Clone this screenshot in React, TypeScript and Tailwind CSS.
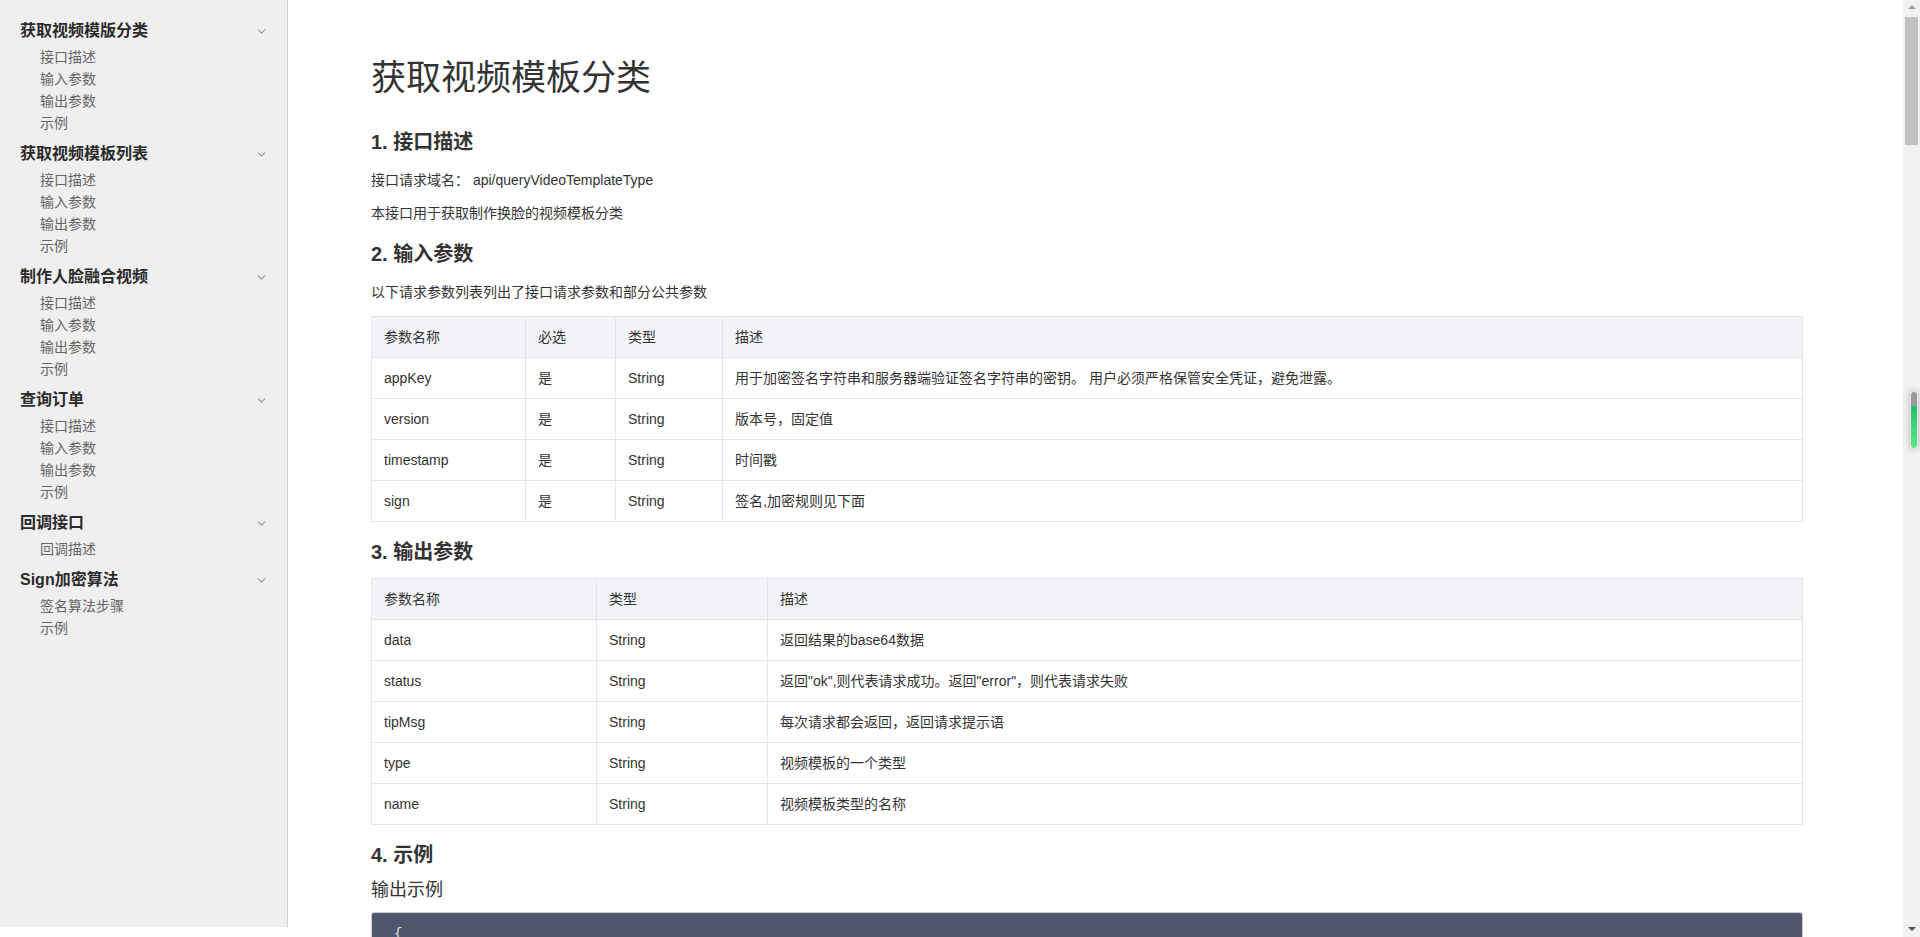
import { ChevronDown } from "lucide-react";

const font = "font-['Liberation_Sans','Noto_Sans_CJK_SC',sans-serif]";

const navGroups = [
  { title: "获取视频模版分类", items: ["接口描述", "输入参数", "输出参数", "示例"] },
  { title: "获取视频模板列表", items: ["接口描述", "输入参数", "输出参数", "示例"] },
  { title: "制作人脸融合视频", items: ["接口描述", "输入参数", "输出参数", "示例"] },
  { title: "查询订单", items: ["接口描述", "输入参数", "输出参数", "示例"] },
  { title: "回调接口", items: ["回调描述"] },
  { title: "Sign加密算法", items: ["签名算法步骤", "示例"] },
];

const inputParams = [
  ["appKey", "是", "String", "用于加密签名字符串和服务器端验证签名字符串的密钥。 用户必须严格保管安全凭证，避免泄露。"],
  ["version", "是", "String", "版本号，固定值"],
  ["timestamp", "是", "String", "时间戳"],
  ["sign", "是", "String", "签名,加密规则见下面"],
];

const outputParams = [
  ["data", "String", "返回结果的base64数据"],
  ["status", "String", "返回\"ok\",则代表请求成功。返回\"error\"，则代表请求失败"],
  ["tipMsg", "String", "每次请求都会返回，返回请求提示语"],
  ["type", "String", "视频模板的一个类型"],
  ["name", "String", "视频模板类型的名称"],
];

function Sidebar() {
  return (
    <aside className="w-[288px] h-[927px] shrink-0 bg-[#efefef] border-r border-[#cfcfcf] pt-[16px]">
      {navGroups.map((g) => (
        <div key={g.title} className="pb-[5px]">
          <div className="h-[30px] flex items-center justify-between pl-5 pr-[19px]">
            <span className="text-[16px] font-bold text-[#2b2b2b]">{g.title}</span>
            <ChevronDown className="w-[13px] h-[13px] text-[#999]" strokeWidth={2} />
          </div>
          {g.items.map((it, i) => (
            <div key={i} className="h-[22px] leading-[22px] pl-10 text-[14px] text-[#666]">
              {it}
            </div>
          ))}
        </div>
      ))}
    </aside>
  );
}

function Cell({ children, head, last }: { children: React.ReactNode; head?: boolean; last?: boolean }) {
  return (
    <div
      className={`h-[41px] flex items-center pl-3 text-[14px] text-[#333] border-b border-[#e2e5ec] ${
        last ? "" : "border-r"
      } ${head ? "bg-[#f3f4f8]" : "bg-white"}`}
    >
      {children}
    </div>
  );
}

function Scrollbar() {
  return (
    <div className="relative w-[17px] h-[937px] shrink-0 bg-[#f1f1f1]">
      <div className="flex justify-center pt-[5px]">
        <div className="w-0 h-0 border-l-[4px] border-r-[4px] border-b-[4px] border-l-transparent border-r-transparent border-b-[#a3a3a3]" />
      </div>
      <div className="mx-[2px] mt-[8px] h-[128px] bg-[#c1c1c1]" />
      <div className="absolute bottom-[6px] left-0 right-0 flex justify-center">
        <div className="w-0 h-0 border-l-[4px] border-r-[4px] border-t-[4px] border-l-transparent border-r-transparent border-t-[#505050]" />
      </div>
      <div className="absolute left-[7px] top-[391px] w-[8px] h-[58px] rounded-full overflow-hidden shadow-[0_0_6px_rgba(0,0,0,0.25)] border border-[#e6e6e6]">
        <div className="h-[14px] bg-[#9a9a9a]" />
        <div className="h-[44px] bg-gradient-to-b from-[#1fbf6a] to-[#5ee88a]" />
      </div>
    </div>
  );
}

export default function App() {
  return (
    <div className={`flex h-[937px] w-[1920px] overflow-hidden bg-white ${font}`}>
      <Sidebar />
      <main className="flex-1 h-[937px] overflow-hidden pl-[83px] pr-[100px] pt-[58px] text-[#333]">
        <h1 className="text-[35px] leading-[40px] font-normal text-[#333]">获取视频模板分类</h1>

        <h2 className="mt-[30px] text-[20px] leading-[28px] font-bold">1. 接口描述</h2>
        <p className="mt-[13px] text-[14px] leading-[22px]">接口请求域名： api/queryVideoTemplateType</p>
        <p className="mt-[11px] text-[14px] leading-[22px]">本接口用于获取制作换脸的视频模板分类</p>

        <h2 className="mt-[16px] text-[20px] leading-[28px] font-bold">2. 输入参数</h2>
        <p className="mt-[13px] text-[14px] leading-[22px]">以下请求参数列表列出了接口请求参数和部分公共参数</p>

        <div className="mt-[13px] grid grid-cols-[154px_90px_107px_1fr] border-l border-t border-[#e2e5ec] w-[1432px]">
          <Cell head>参数名称</Cell>
          <Cell head>必选</Cell>
          <Cell head>类型</Cell>
          <Cell head>描述</Cell>
          {inputParams.map((r) =>
            r.map((c, i) => (
              <Cell key={r[0] + i}>{c}</Cell>
            ))
          )}
        </div>

        <h2 className="mt-[16px] text-[20px] leading-[28px] font-bold">3. 输出参数</h2>
        <div className="mt-[12px] grid grid-cols-[225px_171px_1fr] border-l border-t border-[#e2e5ec] w-[1432px]">
          <Cell head>参数名称</Cell>
          <Cell head>类型</Cell>
          <Cell head>描述</Cell>
          {outputParams.map((r) =>
            r.map((c, i) => (
              <Cell key={r[0] + i}>{c}</Cell>
            ))
          )}
        </div>

        <h2 className="mt-[16px] text-[20px] leading-[28px] font-bold">4. 示例</h2>
        <p className="mt-[9px] text-[18px] leading-[24px]">输出示例</p>
        <pre className="mt-[10px] w-[1432px] bg-[#50566b] border border-[#cfcfcf] rounded-[3px] px-[22px] pt-[10px] pb-[14px] text-[14px] leading-[22px] text-[#e0e0e0] font-['Liberation_Mono',monospace]">
{`{
  "data": "W3sidHlwZSI6IjEiLCJuYW1lIjoi...",
  "status": "ok",
  "tipMsg": "请求成功"
}`}
        </pre>
      </main>
      <Scrollbar />
    </div>
  );
}
